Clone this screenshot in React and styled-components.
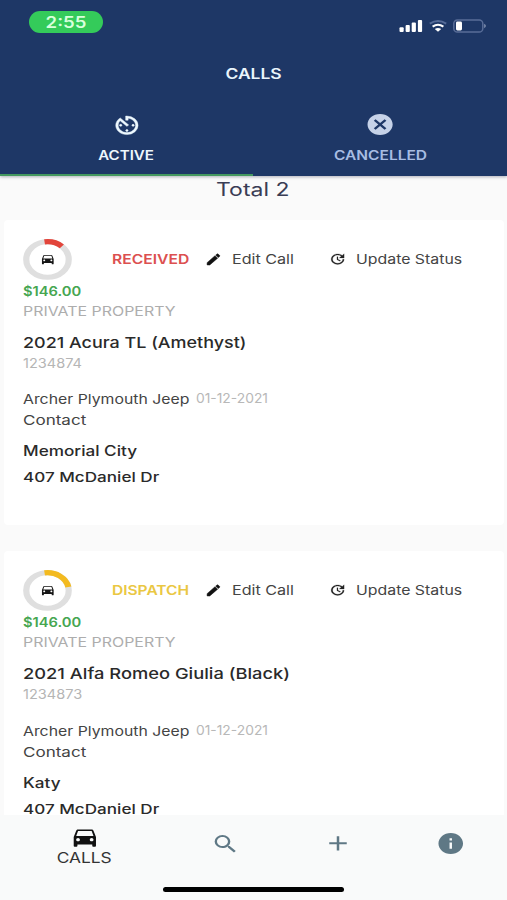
import React from 'react';
import styled, { createGlobalStyle } from 'styled-components';
import { MdAvTimer, MdCancel, MdDirectionsCar, MdEdit, MdUpdate, MdSearch, MdAdd, MdInfo } from 'react-icons/md';

const GlobalStyle = createGlobalStyle`
  * { box-sizing: border-box; }
  body { margin: 0; background: #fafafa; }
`;

const Screen = styled.div`
  width: 507px;
  height: 900px;
  display: flex;
  flex-direction: column;
  overflow: hidden;
  background: #fafafa;
  font-family: Inter, sans-serif;
  color: #444;
`;

/* Wide-set text: glyphs are stretched horizontally by $wide. */
const Label = styled.span`
  display: inline-block;
  white-space: nowrap;
  font-size: ${(p) => p.$size || 13}px;
  font-weight: ${(p) => p.$weight || 400};
  color: ${(p) => p.$color || 'inherit'};
  transform: scaleX(${(p) => p.$wide || 1.22});
  transform-origin: ${(p) => (p.$center ? 'center' : 'left')};
`;

const Header = styled.header`
  flex: none;
  height: 175.5px;
  display: flex;
  flex-direction: column;
  background: #1e3766;
  color: #eaf5fc;
  box-shadow: 0 1px 3px rgba(60, 60, 90, 0.4);
  z-index: 1;
`;

const StatusBar = styled.div`
  height: 44px;
  padding: 11px 20px 0 28.5px;
  display: flex;
  justify-content: space-between;
  align-items: flex-start;
`;

const TimePill = styled.div`
  width: 74.5px;
  height: 22px;
  border-radius: 11px;
  display: flex;
  align-items: center;
  justify-content: center;
  background: #34cb5a;
  color: #d8ffdc;
`;

const StatusIcons = styled.svg`
  width: 88px;
  height: 14px;
  margin-top: 8px;
`;

const TitleBar = styled.div`
  height: 59px;
  display: flex;
  align-items: center;
  justify-content: center;
`;

const Tabs = styled.div`
  flex: 1;
  display: grid;
  grid-template-columns: 253px 254px;
`;

const Tab = styled.div`
  display: flex;
  flex-direction: column;
  align-items: center;
  padding-top: 9px;
  color: ${(p) => (p.$active ? '#eef7fd' : '#a8bde3')};
  border-bottom: 2.5px solid ${(p) => (p.$active ? '#44985f' : 'transparent')};
`;

const TabIcon = styled.div`
  height: 26px;
  display: flex;
  align-items: center;
  color: ${(p) => (p.$active ? '#eef9ff' : '#c6d2e8')};
`;

const TabText = styled.div`
  margin-top: 8px;
  height: 16px;
  line-height: 16px;
`;

const Content = styled.main`
  flex: 1;
  min-height: 0;
  overflow: hidden;
  display: flex;
  flex-direction: column;
`;

const Total = styled.div`
  flex: none;
  height: 44px;
  line-height: 28px;
  padding-right: 1px;
  text-align: center;
`;

const Card = styled.article`
  flex: none;
  height: 305.5px;
  margin: 0 3px 25.8px 4px;
  padding: 19px 20px 0 19.3px;
  border-radius: 4px;
  background: #fff;
`;

const CardTop = styled.div`
  display: grid;
  grid-template-columns: 89.2px 93px 27px 97px 27px 1fr;
  align-items: center;
  height: 41px;
`;

const RingBox = styled.div`
  width: 49px;
  height: 41px;
  display: grid;
  place-items: center;
  color: #161616;
  & > * { grid-area: 1 / 1; }
`;

const Line = styled.div`
  height: ${(p) => p.$h || 20}px;
  line-height: ${(p) => p.$h || 20}px;
  margin-top: ${(p) => p.$gap || 0}px;
  display: flex;
`;

const Company = styled.div`
  width: 172.5px;
`;

const Nav = styled.nav`
  flex: none;
  height: 85px;
  background: #f9fafa;
  display: grid;
  grid-template-columns: 169px 112.5px 113.5px 112px;
  grid-template-rows: 57px 1fr;
  color: #5f7885;
`;

const NavItem = styled.div`
  display: flex;
  flex-direction: column;
  align-items: center;
  justify-content: center;
`;

const ActiveNavItem = styled(NavItem)`
  justify-content: flex-start;
  padding-top: 9px;
  color: #111;
`;

const NavText = styled.div`
  height: 16px;
  margin-top: -1px;
  line-height: 16px;
`;

const HomeBar = styled.div`
  grid-column: 1 / -1;
  justify-self: center;
  width: 181px;
  height: 5px;
  margin-top: 15px;
  border-radius: 3px;
  background: #000;
`;

const wide = (Icon) => styled(Icon).attrs({ preserveAspectRatio: 'none' })`
  display: block;
  flex: none;
  width: ${(p) => p.$w}px;
  height: ${(p) => p.$h}px;
  stroke-width: ${(p) => p.$bold || 0};
  path[fill='none'] { stroke: none; }
`;

const TimerIcon = wide(MdAvTimer);
const CancelIcon = wide(MdCancel);
const CarIcon = wide(MdDirectionsCar);
const EditIcon = wide(MdEdit);
const UpdateIcon = wide(MdUpdate);
const SearchIcon = wide(MdSearch);
const AddIcon = wide(MdAdd);
const InfoIcon = wide(MdInfo);

function DeviceStatus() {
  return (
    <StatusIcons viewBox="0 0 88 14">
      <g fill="#fff">
        <rect x="0.5" y="8.3" width="4.2" height="4.7" rx="1" />
        <rect x="6.6" y="6" width="4.2" height="7" rx="1" />
        <rect x="12.7" y="3.4" width="4.2" height="9.6" rx="1" />
        <rect x="18.9" y="1" width="4.2" height="12" rx="1" />
      </g>
      <g fill="none" strokeWidth="2">
        <path d="M30.8 4.6Q39 -0.6 47.2 4.6" stroke="#556b98" />
        <path d="M33.6 7.6Q39 3.8 44.4 7.6" stroke="#fff" />
      </g>
      <path d="M35.8 10Q39 8 42.2 10L39 12.8Z" fill="#fff" />
      <rect x="54.8" y="1" width="29" height="12" rx="3.6" fill="none" stroke="#596d98" strokeWidth="1.5" />
      <rect x="57" y="2.6" width="6" height="8.8" rx="1.4" fill="#fff" />
      <path d="M85.2 4.8Q88.6 7 85.2 9.2Z" fill="#8090b0" />
    </StatusIcons>
  );
}

function Progress({ color, share }) {
  return (
    <RingBox>
      <svg width="49" height="41" viewBox="0 0 60 60" preserveAspectRatio="none">
        <circle cx="30" cy="30" r="26" fill="none" stroke="#dfdfdf" strokeWidth="7.6" />
        <circle
          cx="30" cy="30" r="26" fill="none" stroke={color} strokeWidth="7.6"
          pathLength="100" strokeDasharray={`${share} 100`} transform="rotate(-98 30 30)"
        />
      </svg>
      <CarIcon $w={15.6} $h={14} />
    </RingBox>
  );
}

function CallCard({ call }) {
  return (
    <Card>
      <CardTop>
        <Progress color={call.ring} share={call.share} />
        <Label $weight={600} $wide={call.statusWide} $color={call.color}>{call.status}</Label>
        <EditIcon $w={17} $h={14.8} $bold={0.8} color="#111" />
        <Label $wide={1.24}>Edit Call</Label>
        <UpdateIcon $w={17.3} $h={14.2} $bold={0.3} color="#222" />
        <Label $wide={1.22}>Update Status</Label>
      </CardTop>
      <Line $gap={2}><Label $size={12.5} $weight={600} $wide={1.178} $color="#46a651">$146.00</Label></Line>
      <Line $gap={-0.6}><Label $wide={1.225} $color="#adadad">PRIVATE PROPERTY</Label></Line>
      <Line $h={22} $gap={10.9}>
        <Label $size={15} $weight={500} $wide={call.vehicleWide} $color="#2a2a2a">{call.vehicle}</Label>
      </Line>
      <Line $gap={-0.8}><Label $wide={1.119} $color="#b5b5b5">{call.id}</Label></Line>
      <Line $h={22} $gap={14.3}>
        <Company><Label $wide={1.217}>Archer Plymouth Jeep</Label></Company>
        <Label $wide={1.065} $color="#b8b8b8">01-12-2021</Label>
      </Line>
      <Line $h={22}><Label $size={13.3} $wide={1.28}>Contact</Label></Line>
      <Line $h={26} $gap={7.2}><Label $size={14} $weight={500} $wide={1.225} $color="#2a2a2a">{call.city}</Label></Line>
      <Line $h={26}><Label $size={13.5} $weight={500} $wide={1.267} $color="#2a2a2a">407 McDaniel Dr</Label></Line>
    </Card>
  );
}

const calls = [
  { id: '1234874', status: 'RECEIVED', statusWide: 1.205, color: '#dc5050', ring: '#e2443a', share: 14, vehicle: '2021 Acura TL (Amethyst)', vehicleWide: 1.197, city: 'Memorial City' },
  { id: '1234873', status: 'DISPATCH', statusWide: 1.195, color: '#eac743', ring: '#f3ba1f', share: 24, vehicle: '2021 Alfa Romeo Giulia (Black)', vehicleWide: 1.22, city: 'Katy' },
];

export default function App() {
  return (
    <Screen>
      <GlobalStyle />
      <Header>
        <StatusBar>
          <TimePill><Label $center $size={15.5} $weight={600} $wide={1.199}>2:55</Label></TimePill>
          <DeviceStatus />
        </StatusBar>
        <TitleBar><Label $center $size={14} $weight={600} $wide={1.245}>CALLS</Label></TitleBar>
        <Tabs>
          <Tab $active>
            <TabIcon $active><TimerIcon $w={29.8} $h={24.7} $bold={0.4} /></TabIcon>
            <TabText><Label $center $size={12.5} $weight={600} $wide={1.206}>ACTIVE</Label></TabText>
          </Tab>
          <Tab>
            <TabIcon><CancelIcon $w={30.2} $h={25.2} /></TabIcon>
            <TabText><Label $center $size={12.5} $weight={600} $wide={1.241}>CANCELLED</Label></TabText>
          </Tab>
        </Tabs>
      </Header>
      <Content>
        <Total><Label $center $size={18} $wide={1.275} $color="#3a3d55">Total 2</Label></Total>
        {calls.map((call) => <CallCard key={call.id} call={call} />)}
      </Content>
      <Nav>
        <ActiveNavItem>
          <CarIcon $w={29.7} $h={26} />
          <NavText><Label $center $size={14} $wide={1.238} $color="#333">CALLS</Label></NavText>
        </ActiveNavItem>
        <NavItem><SearchIcon $w={29} $h={24} /></NavItem>
        <NavItem><AddIcon $w={30} $h={24.7} /></NavItem>
        <NavItem><InfoIcon $w={29.5} $h={25.2} /></NavItem>
        <HomeBar />
      </Nav>
    </Screen>
  );
}
